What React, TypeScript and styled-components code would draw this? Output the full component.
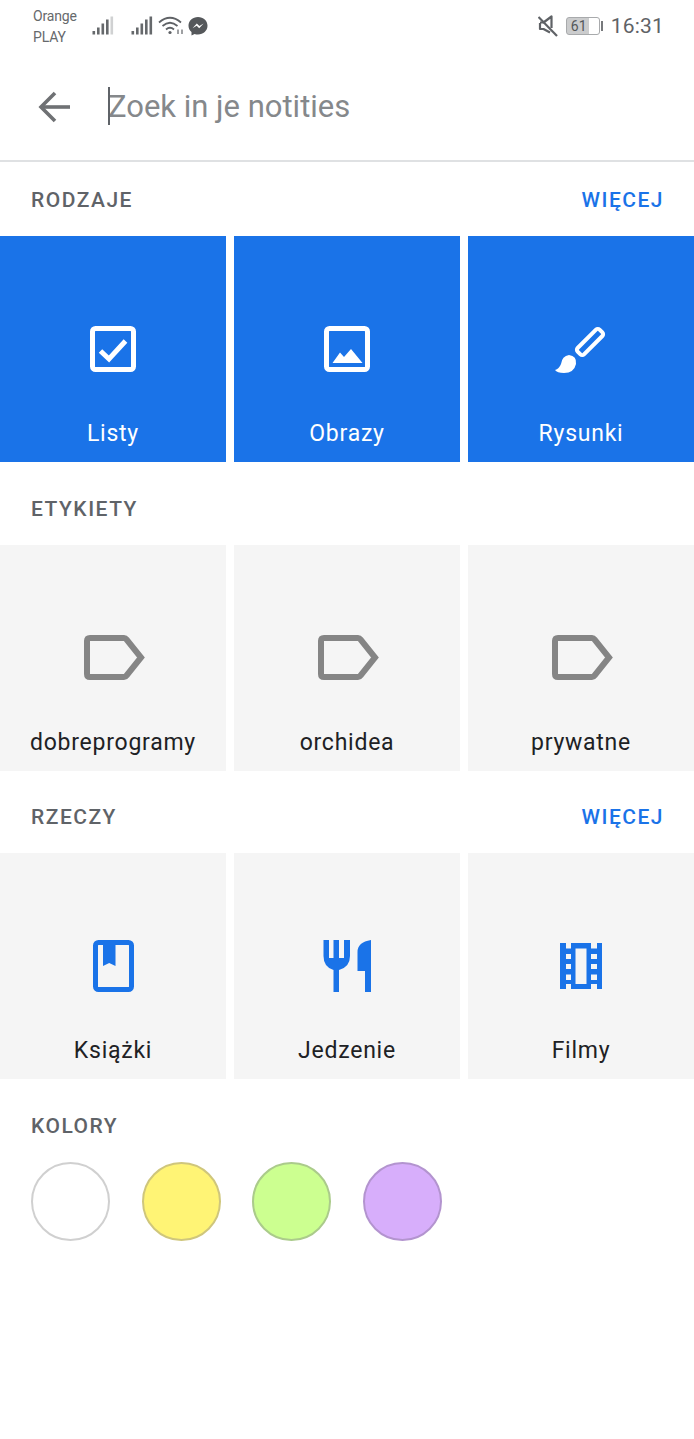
import { ReactNode } from 'react';
import { createGlobalStyle, styled } from 'styled-components';

const GlobalStyle = createGlobalStyle`
  html, body {
    margin: 0;
    padding: 0;
    background: #fff;
    font-family: Roboto, "Liberation Sans", sans-serif;
  }
`;

const BLUE = '#1a73e8';

const Page = styled.div`
  width: 694px;
  height: 1439px;
  overflow: hidden;
  background: #fff;
`;

const StatusBar = styled.div`
  height: 52px;
  display: flex;
  align-items: flex-start;
  color: #5f6266;
`;

const Carrier = styled.div`
  width: 59px;
  margin-left: 33px;
  padding-top: 6px;
  font-size: 14px;
  line-height: 20.5px;
  letter-spacing: -0.15px;
  color: #66696c;
`;

const StatusIcons = styled.div`
  display: flex;
  align-items: center;
  height: 20px;
  margin-top: 16px;
`;

const SignalGroup = styled.div`
  display: flex;
  margin-right: 17px;
`;

const WifiSlot = styled.div`
  display: flex;
  margin: 0 4px 0 5px;
`;

const StatusRight = styled.div`
  margin-left: auto;
  margin-right: 30px;
  margin-top: 12px;
  display: flex;
  align-items: center;
  height: 27px;
`;

const Battery = styled.div`
  width: 24px;
  height: 16px;
  margin-left: 8px;
  padding-right: 8px;
  border: 1px solid #a8aaac;
  border-radius: 3px;
  font-size: 14px;
  line-height: 16px;
  text-align: center;
  color: #55585b;
  background: linear-gradient(to right, #cbcccd 70%, #fff 70%);
`;

const BatteryCap = styled.div`
  width: 2px;
  height: 10px;
  margin-left: 1px;
  background: #77797c;
`;

const Clock = styled.div`
  margin-left: 8px;
  font-size: 21px;
  letter-spacing: 0.2px;
  color: #5f6266;
`;

const SearchBar = styled.div`
  height: 110px;
  display: flex;
  align-items: center;
  padding: 2px 0 0 38px;
  box-sizing: border-box;
  border-bottom: 2px solid #dfe1e3;
`;

const BackButton = styled.div`
  display: flex;
  width: 70px;
  height: 32px;
`;

const Query = styled.div`
  position: relative;
  font-size: 31px;
  color: #85888b;
  line-height: 38px;
`;

const Caret = styled.span`
  position: absolute;
  left: 0;
  top: -1px;
  width: 2px;
  height: 38px;
  background: #5f6368;
`;

const SectionHead = styled.div<{ $height: number }>`
  height: ${(p) => p.$height}px;
  box-sizing: border-box;
  padding: ${(p) => p.$height - 49}px 30px 0 31px;
  display: flex;
  justify-content: space-between;
  font-weight: 500;
  font-size: 21px;
  line-height: 26px;
  letter-spacing: 1.5px;
  color: #5f6368;
`;

const More = styled.span`
  color: ${BLUE};
`;

const TileGrid = styled.div`
  display: grid;
  grid-template-columns: repeat(3, 226px);
  column-gap: 8px;
`;

const Tile = styled.div<{ $active?: boolean }>`
  height: 226px;
  display: flex;
  flex-direction: column;
  align-items: center;
  background: ${(p) => (p.$active ? BLUE : '#f5f5f5')};
  color: ${(p) => (p.$active ? '#fff' : '#202124')};
`;

const TileIcon = styled.div`
  height: 80px;
  width: 80px;
  margin-top: 73px;
  display: flex;
  align-items: center;
  justify-content: center;
`;

const TileLabel = styled.div`
  margin-top: 30px;
  font-size: 23px;
  line-height: 30px;
  letter-spacing: 0.75px;
`;

const Swatches = styled.div`
  display: flex;
  gap: 31.5px;
  padding-left: 31px;
`;

const Swatch = styled.div<{ $fill: string; $edge: string }>`
  width: 79px;
  height: 79px;
  box-sizing: border-box;
  border-radius: 50%;
  background: ${(p) => p.$fill};
  border: 2px solid ${(p) => p.$edge};
`;

const Icon = ({ children }: { children: ReactNode }) => (
  <svg width={80} height={80} viewBox="0 0 80 80" fill="none">
    {children}
  </svg>
);

const ListIcon = () => (
  <Icon>
    <rect x="19.5" y="19.5" width="41" height="41" rx="3" stroke="#fff" strokeWidth="5" />
    <path d="M27.5 42 L36 50 L52.5 32" stroke="#fff" strokeWidth="5" />
  </Icon>
);

const ImageIcon = () => (
  <Icon>
    <rect x="19.5" y="19.5" width="41" height="41" rx="3" stroke="#fff" strokeWidth="5" />
    <path d="M25.5 54 L33 43.5 L37 48 L44 40 L55.5 54 Z" fill="#fff" />
  </Icon>
);

const BrushIcon = () => (
  <Icon>
    <rect x="-15.5" y="-4.5" width="31" height="9" rx="2.5" stroke="#fff" strokeWidth="4" transform="translate(49 33) rotate(-45)" />
    <path d="M28 46 Q36 47 35 55 Q33 64 23 64 Q16 64 14 61 Q18 60 20 55 Q21 47 28 46 Z" fill="#fff" />
  </Icon>
);

const LabelIcon = () => (
  <Icon>
    <path
      d="M17 20 H51 Q52.5 20 53.5 21.5 L68 39.5 L53.5 57.5 Q52.5 59 51 59 H17 Q14 59 14 56 V23 Q14 20 17 20 Z"
      stroke="#858585"
      strokeWidth="6"
    />
  </Icon>
);

const BookIcon = () => (
  <Icon>
    <rect x="22.5" y="16.5" width="36" height="47" rx="3" stroke={BLUE} strokeWidth="5" />
    <path d="M30 16 H42.5 V40 L36.2 37 L30 40 Z" fill={BLUE} />
  </Icon>
);

const FoodIcon = () => (
  <Icon>
    <path
      d="M16.5 14 H22 V32 H26.5 V14 H32 V32 H37 V14 H43 V30 Q43 41 32 44 V66 H26.5 V44 Q16.5 41 16.5 30 Z"
      fill={BLUE}
    />
    <path d="M64 14 V66 H58 V45 H50.5 V26 Q50.5 16 64 14 Z" fill={BLUE} />
  </Icon>
);

const FilmIcon = () => (
  <Icon>
    <path
      fillRule="evenodd"
      d="M19 17 H25 V22.5 H30 V17 H50 V22.5 H56 V17 H61 V63 H56 V58 H50 V63 H30 V58 H25 V63 H19 Z M25 28 V33 H30 V28 Z M25 38 V43 H30 V38 Z M25 48.5 V54 H30 V48.5 Z M50 28 V33 H56 V28 Z M50 38 V43 H56 V38 Z M50 48.5 V54 H56 V48.5 Z M34.5 22.5 V58 H45.5 V22.5 Z"
      fill={BLUE}
    />
  </Icon>
);

const Signal = ({ faded }: { faded?: boolean }) => (
  <svg width="22" height="20" viewBox="0 0 22 20">
    <rect x="0.5" y="15" width="2.6" height="3.5" fill="#66696c" />
    <rect x="5" y="11.5" width="2.6" height="7" fill="#66696c" />
    <rect x="9.5" y="7.5" width="2.6" height="11" fill="#66696c" />
    <rect x="14" y="3.5" width="2.6" height="15" fill="#66696c" />
    <rect x="18.5" y="0.5" width="2.6" height="18" fill={faded ? '#d0d1d2' : '#66696c'} />
  </svg>
);

const WifiIcon = () => (
  <svg width="26" height="20" viewBox="0 0 26 20" fill="none" stroke="#5f6266" strokeWidth="1.8">
    <path d="M1 6.5 Q12 -3 23 6.5" />
    <path d="M4.5 10 Q12 3.5 19.5 10" />
    <path d="M8 13.5 Q12 10 16 13.5" />
    <circle cx="12" cy="16.5" r="1.6" fill="#5f6266" stroke="none" />
    <path d="M20 13.5 V18 M24 13.5 V18" strokeWidth="1.2" />
  </svg>
);

const MessengerIcon = () => (
  <svg width="20" height="20" viewBox="0 0 20 20">
    <path
      d="M10 1 C4.6 1 .5 4.9 .5 9.8 C.5 12.4 1.6 14.6 3.5 16.1 V19.4 L6.6 17.9 C7.7 18.3 8.8 18.5 10 18.5 C15.4 18.5 19.5 14.6 19.5 9.8 C19.5 4.9 15.4 1 10 1 Z"
      fill="#55585b"
    />
    <path d="M4.5 12.2 L8.8 7.6 L11.4 10.1 L15.6 7.6 L11.2 12.2 L8.7 9.8 Z" fill="#fff" />
  </svg>
);

const MuteIcon = () => (
  <svg width="20" height="22" viewBox="0 0 20 22" fill="none" stroke="#5f6266" strokeWidth="2.2">
    <path d="M2 7.5 H5.5 L13.5 1.5 V13 M12 17.5 L5.5 14 H2 V8" strokeLinejoin="round" />
    <path d="M0.5 2 L19 21" />
  </svg>
);

const BackArrow = () => (
  <svg width="32" height="32" viewBox="0 0 32 32" fill="none" stroke="#6f7174" strokeWidth="3.6">
    <path d="M32 16 H4" />
    <path d="M17 2 L3 16 L17 30" />
  </svg>
);

const App = () => (
  <Page>
    <GlobalStyle />
    <StatusBar>
      <Carrier>
        Orange
        <br />
        PLAY
      </Carrier>
      <StatusIcons>
        <SignalGroup>
          <Signal faded />
        </SignalGroup>
        <Signal />
        <WifiSlot>
          <WifiIcon />
        </WifiSlot>
        <MessengerIcon />
      </StatusIcons>
      <StatusRight>
        <MuteIcon />
        <Battery>61</Battery>
        <BatteryCap />
        <Clock>16:31</Clock>
      </StatusRight>
    </StatusBar>
    <SearchBar>
      <BackButton>
        <BackArrow />
      </BackButton>
      <Query>
        <Caret />
        Zoek in je notities
      </Query>
    </SearchBar>

    <SectionHead $height={74}>
      RODZAJE <More>WIĘCEJ</More>
    </SectionHead>
    <TileGrid>
      <Tile $active>
        <TileIcon><ListIcon /></TileIcon>
        <TileLabel>Listy</TileLabel>
      </Tile>
      <Tile $active>
        <TileIcon><ImageIcon /></TileIcon>
        <TileLabel>Obrazy</TileLabel>
      </Tile>
      <Tile $active>
        <TileIcon><BrushIcon /></TileIcon>
        <TileLabel>Rysunki</TileLabel>
      </Tile>
    </TileGrid>

    <SectionHead $height={83}>ETYKIETY</SectionHead>
    <TileGrid>
      {['dobreprogramy', 'orchidea', 'prywatne'].map((name) => (
        <Tile key={name}>
          <TileIcon><LabelIcon /></TileIcon>
          <TileLabel>{name}</TileLabel>
        </Tile>
      ))}
    </TileGrid>

    <SectionHead $height={82}>
      RZECZY <More>WIĘCEJ</More>
    </SectionHead>
    <TileGrid>
      <Tile>
        <TileIcon><BookIcon /></TileIcon>
        <TileLabel>Książki</TileLabel>
      </Tile>
      <Tile>
        <TileIcon><FoodIcon /></TileIcon>
        <TileLabel>Jedzenie</TileLabel>
      </Tile>
      <Tile>
        <TileIcon><FilmIcon /></TileIcon>
        <TileLabel>Filmy</TileLabel>
      </Tile>
    </TileGrid>

    <SectionHead $height={83}>KOLORY</SectionHead>
    <Swatches>
      <Swatch $fill="#ffffff" $edge="#d0d0d0" />
      <Swatch $fill="#fff475" $edge="#cfc67c" />
      <Swatch $fill="#ccff90" $edge="#abcb8b" />
      <Swatch $fill="#d7aefb" $edge="#b394cf" />
    </Swatches>
  </Page>
);

export default App;
